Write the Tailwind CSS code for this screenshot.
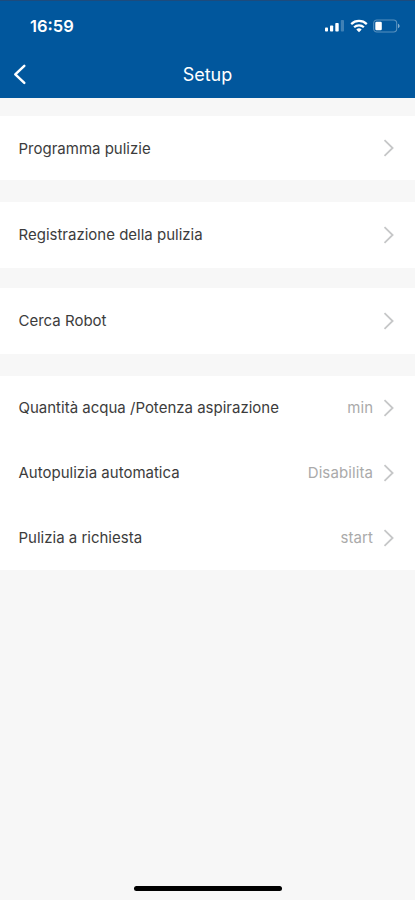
<!DOCTYPE html>
<html lang="it">
<head>
<meta charset="utf-8">
<meta name="viewport" content="width=device-width, initial-scale=1">
<title>Setup</title>
<script src="https://cdn.jsdelivr.net/npm/@tailwindcss/browser@4"></script>
</head>
<body class="bg-[#f7f7f7] font-['Inter','Liberation_Sans',sans-serif] text-[15px] leading-[22px] text-[#3c3c3c]">
<svg class="hidden"><symbol id="next" viewBox="0 0 12 18"><path d="M1.500 1.200 9.600 9l-8.100 7.800" fill="none" stroke="#c6c7c8" stroke-width="1.800"/></symbol></svg>
<div class="flex h-[900px] w-[415px] flex-col overflow-hidden">
  <header class="h-[98px] shrink-0 border-t border-[#1d4b7d] bg-[#01579d] text-white">
    <div class="flex h-[50px] items-center pl-[30px] pr-[15px]">
      <span class="text-[16.500px] font-semibold leading-5">16:59</span>
      <div class="ml-auto flex items-center gap-[5px]">
        <svg width="20" height="12" viewBox="0 0 20 12" fill="#fff"><rect x="0" y="7.500" width="3" height="4" rx=".8"/><rect x="5" y="5.500" width="3.200" height="6" rx=".8"/><rect x="10.300" y="3" width="3.400" height="8.500" rx=".8"/><rect x="15.800" y="0" width="3.200" height="11.500" rx=".8" opacity=".25"/></svg>
        <svg width="18" height="14" viewBox="0 0 18 14" fill="none" stroke="#fff" stroke-width="2.200"><path d="M1.200 5.100a11.200 11.200 0 0 1 15.600 0M4.100 8.300a7 7 0 0 1 9.800 0"/><path d="M6.300 10.400a4 4 0 0 1 5.400 0L9 13.200z" fill="#fff" stroke="none"/></svg>
        <svg width="27" height="14" viewBox="0 0 27 14"><rect x=".7" y="1" width="23" height="12" rx="3.200" fill="none" stroke="#fff" stroke-opacity=".35" stroke-width="1.100"/><rect x="2.300" y="2.700" width="6.500" height="8.600" rx="1.200" fill="#fff"/><path d="M25 4.800v4.400c1-.4 1.600-1.200 1.600-2.200S26 5.200 25 4.800" fill="#fff" opacity=".5"/></svg>
      </div>
    </div>
    <div class="grid h-[47px] grid-cols-[1fr_auto_1fr] items-center pl-[13px] pr-[13px]">
      <svg width="14" height="22" viewBox="0 0 14 22" fill="none" stroke="#fff" stroke-width="2.500" stroke-linecap="round" stroke-linejoin="round"><path d="M11.300 1.800 2.300 10.300l9 8.500"/></svg>
      <h1 class="text-[18px] leading-6">Setup</h1>
    </div>
  </header>
  <main class="flex flex-col pt-[18px]">
    <section class="mb-[22px] flex h-[64px] items-center bg-white pl-[18.500px] pr-[20px]"><span class="pt-px">Programma pulizie</span><svg class="ml-auto" width="12" height="18"><use href="#next"/></svg></section>
    <section class="mb-[20px] flex h-[66px] items-center bg-white pl-[18.500px] pr-[20px]"><span>Registrazione della pulizia</span><svg class="ml-auto" width="12" height="18"><use href="#next"/></svg></section>
    <section class="mb-[22px] flex h-[66px] items-center bg-white pl-[18.500px] pr-[20px]"><span>Cerca Robot</span><svg class="ml-auto" width="12" height="18"><use href="#next"/></svg></section>
    <section class="bg-white pl-[18.500px] pr-[20px]">
      <div class="flex h-[64px] items-center"><span>Quantità acqua /Potenza aspirazione</span><span class="ml-auto mr-[10px] text-[#aaaaaa]">min</span><svg width="12" height="18"><use href="#next"/></svg></div>
      <div class="flex h-[65px] items-center"><span class="pt-px">Autopulizia automatica</span><span class="ml-auto mr-[10px] pt-px tracking-[0.1px] text-[#aaaaaa]">Disabilita</span><svg width="12" height="18"><use href="#next"/></svg></div>
      <div class="flex h-[65px] items-center"><span class="pt-px">Pulizia a richiesta</span><span class="ml-auto mr-[10px] pt-px tracking-[0.1px] text-[#aaaaaa]">start</span><svg width="12" height="18"><use href="#next"/></svg></div>
    </section>
  </main>
  <div class="mx-auto mb-[9px] mt-auto h-[5px] w-[148px] rounded-full bg-black"></div>
</div>
</body>
</html>
